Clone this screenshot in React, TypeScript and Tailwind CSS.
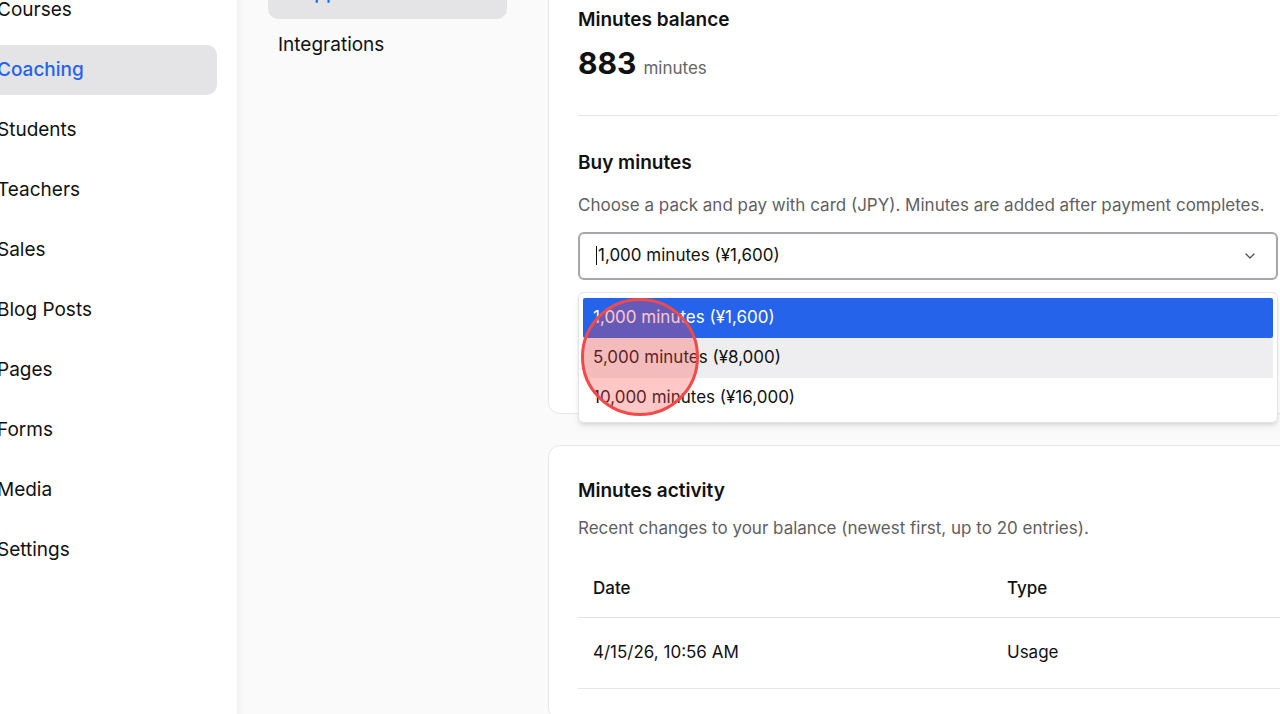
import { ChevronDown } from "lucide-react";

const sideItems = ["Courses", "Coaching", "Students", "Teachers", "Sales", "Blog Posts", "Pages", "Forms", "Media", "Settings"];

const packs = ["1,000 minutes (¥1,600)", "5,000 minutes (¥8,000)", "10,000 minutes (¥16,000)"];

const App = () => {
    return (
        <div className="relative h-[714px] w-[1280px] overflow-hidden bg-[#fafafa] font-['Inter',sans-serif] text-[#111]">
            <div className="flex h-full ml-[-40px]">

                {/* main sidebar */}
                <aside className="w-[277px] shrink-0 bg-white">
                    <ul className="flex flex-col gap-[10px] mt-[-15px] mx-[20px]">
                        {sideItems.map((item) => (
                            <li
                                key={item}
                                className={
                                    item === "Coaching"
                                        ? "h-[50px] flex items-center pl-[17px] rounded-[10px] bg-[#e4e4e7] text-[19px] font-medium text-[#2563eb]"
                                        : "h-[50px] flex items-center pl-[17px] rounded-[10px] text-[19px]"
                                }
                            >
                                {item}
                            </li>
                        ))}
                    </ul>
                </aside>

                {/* coaching sub nav */}
                <nav className="w-[311px] shrink-0 bg-[#fafafa] shadow-[inset_8px_0_8px_-8px_rgba(0,0,0,0.07)]">
                    <ul className="flex flex-col mt-[-33px] ml-[31px] w-[239px]">
                        <li className="h-[52px] flex items-center pl-[10px] rounded-[10px] bg-[#e4e4e7] text-[19px] font-medium text-[#2563eb]">
                            In-app video
                        </li>
                        <li className="h-[52px] flex items-center pl-[10px] text-[19px]">Integrations</li>
                    </ul>
                </nav>

                <main className="flex flex-col gap-[31px] mt-[-25px]">
                    {/* balance + buy card */}
                    <section className="w-[760px] bg-white border border-[#e6e6e6] rounded-[12px] px-[29px] pt-[30px] pb-[30px]">
                        <h2 className="text-[19px] leading-[28px] font-semibold">Minutes balance</h2>
                        <div className="mt-[11px] flex items-baseline gap-[7px]">
                            <span className="text-[30px] leading-[36px] font-bold">883</span>
                            <span className="text-[17px] text-[#666]">minutes</span>
                        </div>

                        <div className="mt-[33px] border-t border-[#e5e5e5]" />

                        <h2 className="mt-[33px] text-[19px] leading-[28px] font-semibold">Buy minutes</h2>
                        <p className="mt-[16px] text-[17px] leading-[24px] text-[#5f5f5f]">
                            Choose a pack and pay with card (JPY). Minutes are added after payment completes.
                        </p>

                        <div className="relative mt-[15px]">
                            <div className="h-[48px] flex items-center justify-between border-2 border-[#a6a6ab] rounded-[6px] pl-[16px] pr-[18px]">
                                <span className="flex items-center text-[17px]">
                                    <span className="w-px h-[19px] bg-[#111] mr-[1px]" />
                                    {packs[0]}
                                </span>
                                <ChevronDown className="w-4 h-4 text-[#555]" strokeWidth={2} />
                            </div>

                            <ul className="absolute left-0 right-0 top-[60px] z-10 bg-white border border-[#e4e4e4] rounded-[6px] shadow-md p-[4px] pt-[5px]">
                                {packs.map((pack, i) => (
                                    <li
                                        key={pack}
                                        className={
                                            i === 0
                                                ? "h-[40px] flex items-center pl-[10px] text-[17px] bg-[#2563eb] text-white rounded-[2px]"
                                                : i === 1
                                                ? "h-[40px] flex items-center pl-[10px] text-[17px] bg-[#eeeef0]"
                                                : "h-[40px] flex items-center pl-[10px] text-[17px]"
                                        }
                                    >
                                        {pack}
                                    </li>
                                ))}
                            </ul>
                        </div>

                        <div className="h-[103px]" />
                    </section>

                    {/* activity card */}
                    <section className="w-[760px] bg-white border border-[#e6e6e6] rounded-[12px] px-[29px] pt-[31px] pb-[30px]">
                        <h2 className="text-[19px] leading-[28px] font-semibold">Minutes activity</h2>
                        <p className="mt-[11px] text-[17px] leading-[24px] text-[#5f5f5f]">
                            Recent changes to your balance (newest first, up to 20 entries).
                        </p>

                        <table className="mt-[20px] w-[900px] text-left text-[17px]">
                            <thead>
                                <tr className="h-[58px] border-b border-[#e5e5e5]">
                                    <th className="w-[414px] px-[15px] font-medium">Date</th>
                                    <th className="px-[15px] font-medium">Type</th>
                                </tr>
                            </thead>
                            <tbody>
                                <tr className="h-[71px] border-b border-[#e5e5e5]">
                                    <td className="px-[15px]">4/15/26, 10:56 AM</td>
                                    <td className="px-[15px]">Usage</td>
                                </tr>
                            </tbody>
                        </table>
                    </section>
                </main>
            </div>

            {/* click indicator */}
            <div className="absolute left-[581px] top-[298px] z-20 w-[118px] h-[118px] rounded-full border-[3px] border-[#f04a4a] bg-[rgba(255,69,65,0.3)]" />
        </div>
    );
};

export default App;
